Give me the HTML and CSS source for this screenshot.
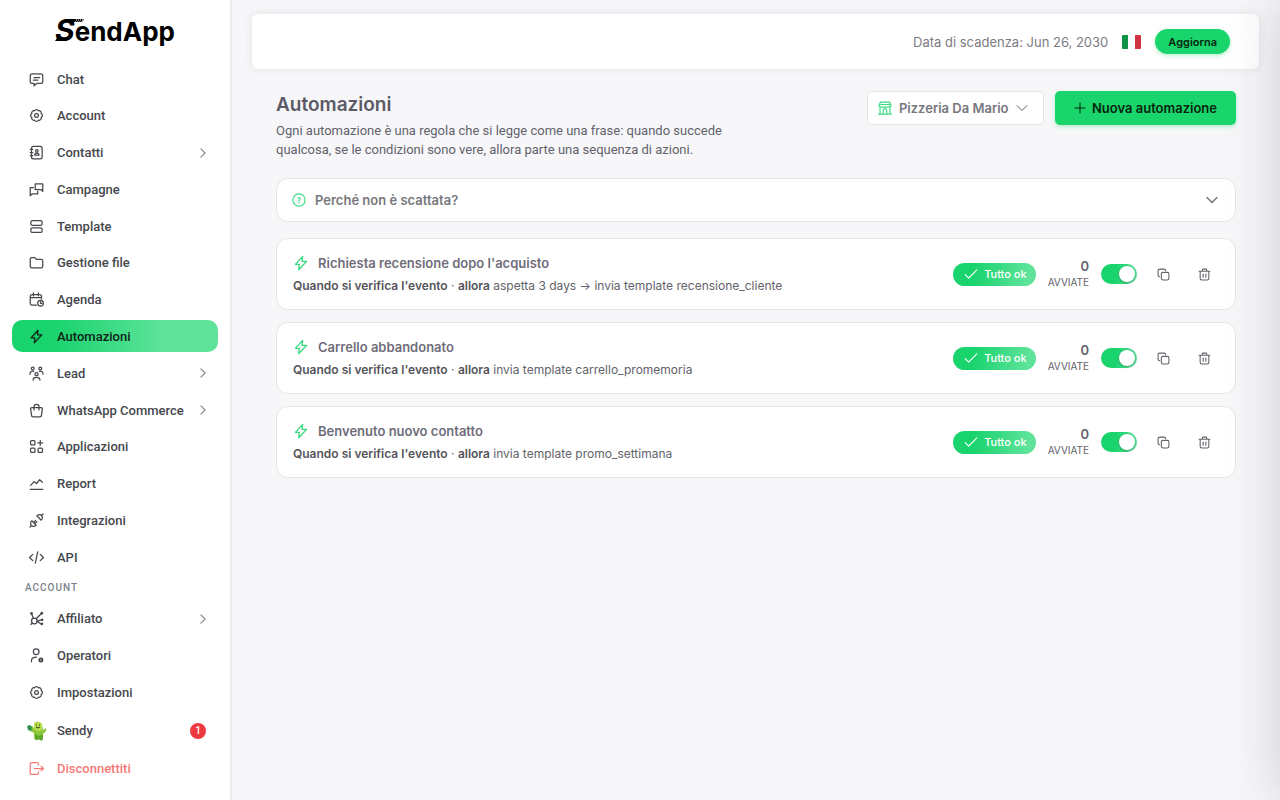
FILE: index.html
```
<!doctype html>
<html lang="it">
<head>
    <meta charset="UTF-8">
    <meta name="viewport" content="width=device-width, initial-scale=1.0">
    <title>SendApp - Automazioni</title>
    <link rel="stylesheet" href="styles.css">
</head>
<body>
<svg class="sprite" aria-hidden="true">
    <symbol id="chat" viewBox="0 0 24 24"><path d="M5 3h14a3 3 0 0 1 3 3v9a3 3 0 0 1-3 3h-6l-5 4v-4H5a3 3 0 0 1-3-3V6a3 3 0 0 1 3-3zM8 9h9M7 13h7"/></symbol>
    <symbol id="gear" viewBox="0 0 24 24"><path d="M15.1 4.600A3.300 3.300 0 0 1 19.400 8.900A3.300 3.300 0 0 1 19.400 15.100A3.300 3.300 0 0 1 15.100 19.400A3.300 3.300 0 0 1 8.900 19.400A3.300 3.300 0 0 1 4.600 15.100A3.300 3.300 0 0 1 4.600 8.900A3.300 3.300 0 0 1 8.900 4.600A3.300 3.300 0 0 1 15.100 4.600z"/><circle cx="12" cy="12" r="3"/></symbol>
    <symbol id="contacts" viewBox="0 0 24 24"><rect x="4" y="2" width="17" height="20" rx="3"/><circle cx="12.500" cy="9.500" r="2"/><path d="M9 16c0-4 7-4 7 0zM2 7h4M2 12h4M2 17h4"/></symbol>
    <symbol id="campaign" viewBox="0 0 24 24"><path d="M10 3h12v12l-3-3h-9zM7 9H2v13l3-3h9v-4"/></symbol>
    <symbol id="template" viewBox="0 0 24 24"><rect x="3" y="2.500" width="18" height="7.500" rx="2.500"/><rect x="3" y="14" width="18" height="7.500" rx="2.500"/></symbol>
    <symbol id="folder" viewBox="0 0 24 24"><path d="M2 6a2 2 0 0 1 2-2h5l3 3h8a2 2 0 0 1 2 2v9a2.500 2.500 0 0 1-2.500 2.500h-15A2.500 2.500 0 0 1 2 18z"/></symbol>
    <symbol id="agenda" viewBox="0 0 24 24"><path d="M12 21H5a3 3 0 0 1-3-3V7a3 3 0 0 1 3-3h12a3 3 0 0 1 3 3v4M2 9h18M7 1.500V6M15 1.500V6"/><circle cx="18.500" cy="18" r="4.500"/><path d="M18.500 15.500V18H21"/></symbol>
    <symbol id="bolt" viewBox="0 0 24 24"><path d="M14.500 2L3.500 14h6L8.500 22 20.500 9.500h-7z"/></symbol>
    <symbol id="lead" viewBox="0 0 24 24"><circle cx="6" cy="4" r="2.300"/><circle cx="18" cy="4" r="2.300"/><circle cx="12" cy="13" r="2.500"/><path d="M1.500 13c0-4 2-5 6-4.500M22.500 13c0-4-2-5-6-4.500M6.500 22.500c0-6 11-6 11 0"/></symbol>
    <symbol id="bag" viewBox="0 0 24 24"><path d="M4.500 7.500h15a2 2 0 0 1 2 2L20 19a3 3 0 0 1-3 3H7a3 3 0 0 1-3-3L2.500 9.500a2 2 0 0 1 2-2zM8 11V6a4 4 0 0 1 8 0v5"/></symbol>
    <symbol id="apps" viewBox="0 0 24 24"><rect x="2.500" y="2.500" width="7" height="7" rx="1.500"/><rect x="2.500" y="14.500" width="7" height="7" rx="1.500"/><rect x="14.500" y="14.500" width="7" height="7" rx="1.500"/><path d="M18 2v8M14 6h8"/></symbol>
    <symbol id="report" viewBox="0 0 24 24"><path d="M2 21.500h20M2.500 15l6-6 3.500 3 5-6 4.500 4"/></symbol>
    <symbol id="plug" viewBox="0 0 24 24"><path d="M1.500 22.500l2.500-2.500M4.500 12.500l7 7c-2 2.500-5.500 2.500-7.500.5s-2-5.500.5-7.500zM7.500 15l3-3M9.500 17l3-3M22.500 1.500L20 4M12.500 4.500l7 7c2.500-2 2.500-5.500.5-7.500s-5.500-2-7.500.5z"/></symbol>
    <symbol id="code" viewBox="0 0 24 24"><path d="M6 7l-5 5 5 5M18 7l5 5-5 5M14 3l-4 18"/></symbol>
    <symbol id="affiliate" viewBox="0 0 24 24"><circle cx="8.500" cy="16" r="4.500"/><circle cx="4" cy="4" r="1.300"/><circle cx="20.500" cy="3.500" r="1.300"/><circle cx="21" cy="14" r="1"/><circle cx="20.500" cy="20.500" r="1.300"/><path d="M4.500 5.500L7 11.500M19.500 4.500l-8 8M13 16c3 0 5-2 7.500-2M13 17c3 0 3 3.500 6.500 3.500M3 21.500l2.500-2.500"/></symbol>
    <symbol id="operator" viewBox="0 0 24 24"><circle cx="11.500" cy="6" r="4.500"/><path d="M4 22v-2c0-4 3-5.500 8-5.500"/><circle cx="19" cy="19" r="2.500" stroke-width="3"/></symbol>
    <symbol id="logout" viewBox="0 0 24 24"><path d="M15 6.500V5a2.500 2.500 0 0 0-2.500-2.500h-8A2.500 2.500 0 0 0 2 5v14a2.500 2.500 0 0 0 2.500 2.500h8A2.500 2.500 0 0 0 15 19v-1.500M8.500 12H23M19.500 8.500L23 12l-3.500 3.500"/></symbol>
    <symbol id="right" viewBox="0 0 24 24"><path d="M7 2l10 10L7 22"/></symbol>
    <symbol id="down" viewBox="0 0 24 24"><path d="M2 7l10 10L22 7"/></symbol>
    <symbol id="store" viewBox="0 0 24 24"><path d="M4 2h16l2.500 6a3 3 0 0 1-5.200 1.500 3.500 3.500 0 0 1-5.300 0 3.500 3.500 0 0 1-5.300 0A3 3 0 0 1 1.500 8zM2 6h20M3.500 11v11M20.500 11v11M1 22.500h22M9 22v-6a3 3 0 0 1 6 0v6"/></symbol>
    <symbol id="plus" viewBox="0 0 24 24"><path d="M12 2v20M2 12h20"/></symbol>
    <symbol id="help" viewBox="0 0 24 24"><circle cx="12" cy="12" r="10.500"/><path d="M10 8.500c3-2 5 .5 3.500 2.500-.5.700-1.500 1-1.500 2.500M12 16v1"/></symbol>
    <symbol id="check" viewBox="0 0 24 24"><path d="M2 13l6 6L22 5"/></symbol>
    <symbol id="copy" viewBox="0 0 24 24"><rect x="8" y="8" width="14" height="14" rx="3"/><path d="M5 16a3 3 0 0 1-3-3V5a3 3 0 0 1 3-3h8a3 3 0 0 1 3 3"/></symbol>
    <symbol id="trash" viewBox="0 0 24 24"><path d="M2 6h20M7.500 6l1-4h7l1 4M4 6v13a3 3 0 0 0 3 3h10a3 3 0 0 0 3-3V6M9.500 11v6M14.500 11v6"/></symbol>
</svg>

<div class="layout">
    <aside class="sidebar">
        <a class="logo" href="#"><span class="logo-s">S</span>endApp
            <svg class="logo-swoosh" viewBox="0 0 32 26">
                <path d="M13 2h16l-2 3H12zM2 21h10v3H0z"/>
                <path d="M21 3h9M20 5h9" stroke="#fff" stroke-dasharray="1 1"/>
            </svg>
        </a>
        <nav class="menu">
            <a class="menu-item" href="#"><svg class="icon"><use href="#chat"/></svg>Chat</a>
            <a class="menu-item" href="#"><svg class="icon"><use href="#gear"/></svg>Account</a>
            <a class="menu-item" href="#"><svg class="icon"><use href="#contacts"/></svg>Contatti<svg class="icon arrow"><use href="#right"/></svg></a>
            <a class="menu-item" href="#"><svg class="icon"><use href="#campaign"/></svg>Campagne</a>
            <a class="menu-item" href="#"><svg class="icon"><use href="#template"/></svg>Template</a>
            <a class="menu-item" href="#"><svg class="icon"><use href="#folder"/></svg>Gestione file</a>
            <a class="menu-item" href="#"><svg class="icon"><use href="#agenda"/></svg>Agenda</a>
            <a class="menu-item active" href="#"><svg class="icon"><use href="#bolt"/></svg>Automazioni</a>
            <a class="menu-item" href="#"><svg class="icon"><use href="#lead"/></svg>Lead<svg class="icon arrow"><use href="#right"/></svg></a>
            <a class="menu-item" href="#"><svg class="icon"><use href="#bag"/></svg>WhatsApp Commerce<svg class="icon arrow"><use href="#right"/></svg></a>
            <a class="menu-item" href="#"><svg class="icon"><use href="#apps"/></svg>Applicazioni</a>
            <a class="menu-item" href="#"><svg class="icon"><use href="#report"/></svg>Report</a>
            <a class="menu-item" href="#"><svg class="icon"><use href="#plug"/></svg>Integrazioni</a>
            <a class="menu-item" href="#"><svg class="icon"><use href="#code"/></svg>API</a>
            <div class="menu-label">ACCOUNT</div>
            <a class="menu-item" href="#"><svg class="icon"><use href="#affiliate"/></svg>Affiliato<svg class="icon arrow"><use href="#right"/></svg></a>
            <a class="menu-item" href="#"><svg class="icon"><use href="#operator"/></svg>Operatori</a>
            <a class="menu-item" href="#"><svg class="icon"><use href="#gear"/></svg>Impostazioni</a>
            <a class="menu-item sendy" href="#">
                <svg class="mascot" viewBox="0 0 20 20">
                    <path d="M7 3c1-3 7-3 8 1l1 5 3-2c1 3-1 4-3 6v4c0 3-3 3-4 1-2 2-5 1-5-2l0-4-4-2-1-4 3-1 2 2z" fill="#8cc63a"/>
                    <path d="M7 3c1-3 7-3 8 1v5c-3 2-6 1-8-1z" fill="#b6de4c"/>
                    <path d="M0 5l3-1 2 2-1 4-3-1z" fill="#2f9150"/>
                    <path d="M8 13l4 2 4-2v4c0 3-3 3-4 1-2 2-4 1-4-1z" fill="#5da52d"/>
                    <path d="M9 6q2 2 4 0M9 4h1M12 4h1" stroke="#344018" fill="none"/>
                </svg>Sendy<span class="count">1</span></a>
            <a class="menu-item logout" href="#"><svg class="icon"><use href="#logout"/></svg>Disconnettiti</a>
        </nav>
    </aside>

    <main class="main">
        <header class="topbar">
            <span class="expire">Data di scadenza: Jun 26, 2030</span>
            <svg class="flag" viewBox="0 0 19 14" role="img" aria-label="Italiano"><path d="M1 0h5v14H1a1 1 0 0 1-1-1V1a1 1 0 0 1 1-1z" fill="#109347"/><path d="M6 0h7v14H6z" fill="#fff"/><path d="M13 0h5a1 1 0 0 1 1 1v12a1 1 0 0 1-1 1h-5z" fill="#d13440"/></svg>
            <button class="btn btn-pill" type="button">Aggiorna</button>
        </header>

        <div class="content">
            <div class="page-head">
                <div class="intro">
                    <h1>Automazioni</h1>
                    <p>Ogni automazione è una regola che si legge come una frase: quando succede qualcosa, se le condizioni sono vere, allora parte una sequenza di azioni.</p>
                </div>
                <div class="tools">
                    <label class="picker">
                        <svg class="icon green"><use href="#store"/></svg>
                        <select aria-label="Account"><option>Pizzeria Da Mario</option></select>
                        <svg class="icon caret"><use href="#down"/></svg>
                    </label>
                    <button class="btn btn-new" type="button"><svg class="icon"><use href="#plus"/></svg>Nuova automazione</button>
                </div>
            </div>

            <details class="card why">
                <summary><svg class="icon green"><use href="#help"/></svg>Perché non è scattata?<svg class="icon caret"><use href="#down"/></svg></summary>
            </details>

            <div class="rules">
                <article class="card rule">
                    <div class="rule-text">
                        <h2><svg class="icon green"><use href="#bolt"/></svg>Richiesta recensione dopo l'acquisto</h2>
                        <p><b>Quando si verifica l'evento</b> · <b>allora</b> aspetta 3 days → invia template recensione_cliente</p>
                    </div>
                    <span class="badge"><svg class="icon"><use href="#check"/></svg>Tutto ok</span>
                    <div class="stat"><b>0</b><span>AVVIATE</span></div>
                    <input class="switch" type="checkbox" aria-label="Attiva Richiesta recensione" checked>
                    <button class="icon-btn" type="button" aria-label="Duplica"><svg class="icon"><use href="#copy"/></svg></button>
                    <button class="icon-btn" type="button" aria-label="Elimina"><svg class="icon"><use href="#trash"/></svg></button>
                </article>
                <article class="card rule">
                    <div class="rule-text">
                        <h2><svg class="icon green"><use href="#bolt"/></svg>Carrello abbandonato</h2>
                        <p><b>Quando si verifica l'evento</b> · <b>allora</b> invia template carrello_promemoria</p>
                    </div>
                    <span class="badge"><svg class="icon"><use href="#check"/></svg>Tutto ok</span>
                    <div class="stat"><b>0</b><span>AVVIATE</span></div>
                    <input class="switch" type="checkbox" aria-label="Attiva Carrello abbandonato" checked>
                    <button class="icon-btn" type="button" aria-label="Duplica"><svg class="icon"><use href="#copy"/></svg></button>
                    <button class="icon-btn" type="button" aria-label="Elimina"><svg class="icon"><use href="#trash"/></svg></button>
                </article>
                <article class="card rule">
                    <div class="rule-text">
                        <h2><svg class="icon green"><use href="#bolt"/></svg>Benvenuto nuovo contatto</h2>
                        <p><b>Quando si verifica l'evento</b> · <b>allora</b> invia template promo_settimana</p>
                    </div>
                    <span class="badge"><svg class="icon"><use href="#check"/></svg>Tutto ok</span>
                    <div class="stat"><b>0</b><span>AVVIATE</span></div>
                    <input class="switch" type="checkbox" aria-label="Attiva Benvenuto nuovo contatto" checked>
                    <button class="icon-btn" type="button" aria-label="Duplica"><svg class="icon"><use href="#copy"/></svg></button>
                    <button class="icon-btn" type="button" aria-label="Elimina"><svg class="icon"><use href="#trash"/></svg></button>
                </article>
            </div>
        </div>
    </main>
</div>
<div class="drawer"></div>
</body>
</html>
```
FILE: styles.css
```
*{
    margin: 0;
    padding: 0;
    box-sizing: border-box;
}
body{
    font-family: Inter, "Liberation Sans", sans-serif;
    font-size: 13px;
    color: #62626a;
    background: #f7f7fa;
    overflow-x: hidden;
}
a{
    color: inherit;
    text-decoration: none;
}
button, select, input{
    font: inherit;
    color: inherit;
    border: 0;
    background: none;
}
.sprite{
    display: none;
}
.icon{
    width: 16px;
    height: 16px;
    flex: none;
    fill: none;
    stroke: currentColor;
    stroke-width: 2;
    stroke-linecap: round;
    stroke-linejoin: round;
}
.green{
    color: #3ddc84;
}
.layout{
    display: flex;
    min-height: 100vh;
}

/* sidebar */
.sidebar{
    display: flex;
    flex-direction: column;
    width: 232px;
    height: 100vh;
    padding: 0 12px 15px;
    background: #fff;
    border-right: 2px solid #ebebef;
    flex: none;
}
.logo{
    position: relative;
    height: 63px;
    text-align: center;
    font-size: 26px;
    font-weight: 700;
    line-height: 63px;
    color: #000;
}
.logo-s{
    font-size: 30px;
    font-style: italic;
    line-height: 1;
}
.logo-swoosh{
    position: absolute;
    left: 43px;
    top: 17px;
    width: 32px;
    height: 26px;
}
.menu{
    display: flex;
    flex-direction: column;
    flex: 1;
    justify-content: space-between;
    font-family: Roboto, "Liberation Sans", sans-serif;
}
.menu-item{
    display: flex;
    align-items: center;
    gap: 13px;
    height: 32px;
    padding: 0 10px 0 17px;
    border-radius: 10px;
    font-weight: 500;
    white-space: nowrap;
    color: #46484d;
}
.menu-item .icon{
    width: 15px;
    height: 15px;
}
.menu-item .arrow{
    width: 10px;
    height: 10px;
    margin-left: auto;
    stroke-width: 3;
    color: #8b8d92;
}
.menu-item.active{
    color: #0d2417;
    background: linear-gradient(90deg, #19d36d 20%, #5fe39b 75%);
}
.menu-label{
    padding-left: 13px;
    font-size: 10px;
    font-weight: 500;
    line-height: 20px;
    letter-spacing: 1px;
    color: #7c818d;
}
.menu-item.sendy{
    height: 35px;
    gap: 10px;
    padding: 0 12px 0 15px;
}
.mascot{
    width: 20px;
    height: 20px;
}
.count{
    width: 16px;
    height: 16px;
    margin-left: auto;
    border-radius: 50%;
    font-size: 10px;
    line-height: 16px;
    text-align: center;
    color: #fff;
    background: #ed3a41;
}
.menu-item.logout{
    color: #f47a78;
}

/* main */
.main{
    flex: 1;
    padding: 14px 21px 20px 20px;
}
.topbar{
    display: flex;
    align-items: center;
    justify-content: flex-end;
    gap: 14px;
    height: 55px;
    padding: 0 29px;
    border-radius: 6px;
    background: #fff;
    box-shadow: 0 0 10px rgba(50, 50, 60, .1);
}
.expire{
    color: #7c7c82;
}
.flag{
    width: 19px;
    height: 14px;
}
.btn{
    font-weight: 600;
    color: #06250f;
    background: #19d56b;
    box-shadow: 0 2px 4px rgba(25, 213, 107, .3);
}
.btn-pill{
    height: 25px;
    padding: 0 13px;
    border-radius: 13px;
    font-size: 11px;
}
.content{
    padding: 22px 23px 0 24px;
}
.page-head{
    display: flex;
    justify-content: space-between;
    align-items: flex-start;
    min-height: 87px;
}
.intro{
    max-width: 480px;
}
.intro h1{
    font-size: 19px;
    font-weight: 600;
    line-height: 28px;
    margin-bottom: 2px;
    color: #5c5a66;
}
.intro p{
    font-family: Roboto, "Liberation Sans", sans-serif;
    line-height: 19px;
}
.tools{
    display: flex;
    gap: 11px;
}
.picker{
    display: flex;
    align-items: center;
    gap: 7px;
    height: 34px;
    padding: 0 15px 0 10px;
    border: 1px solid #e6e6ea;
    border-radius: 5px;
    background: #fff;
}
.picker .green{
    width: 14px;
    height: 14px;
}
.picker select{
    appearance: none;
    font-weight: 600;
    color: #77777e;
}
.picker .caret, .why .caret, .btn-new .icon{
    width: 12px;
    height: 12px;
}
.btn-new{
    display: flex;
    align-items: center;
    gap: 6px;
    height: 34px;
    padding: 0 19px;
    border-radius: 5px;
}
.card{
    border: 1px solid #e4e4e7;
    border-radius: 12px;
    background: #fff;
}
.why{
    margin-bottom: 16px;
}
.why summary{
    display: flex;
    align-items: center;
    gap: 9px;
    height: 42px;
    padding: 0 17px 0 15px;
    font-weight: 600;
    color: #77777d;
    list-style: none;
}
.why .green{
    width: 14px;
    height: 14px;
}
.why .caret{
    margin-left: auto;
    stroke-width: 3;
}
.rules{
    display: grid;
    gap: 12px;
}
.rule{
    display: flex;
    align-items: center;
    gap: 12px;
    padding: 12px 16px;
}
.rule-text{
    flex: 1;
}
.rule h2{
    display: flex;
    align-items: center;
    gap: 9px;
    font-size: 13px;
    font-weight: 600;
    line-height: 24px;
    color: #6f6d7a;
}
.rule p{
    font-size: 12px;
    line-height: 22px;
}
.rule p b{
    font-weight: 600;
    color: #55555b;
}
.badge{
    display: flex;
    align-items: center;
    gap: 6px;
    height: 23px;
    padding: 0 9px 0 11px;
    border-radius: 12px;
    font-size: 11px;
    font-weight: 500;
    color: #fff;
    background: linear-gradient(100deg, #19d36d 25%, #5fe39b 90%);
}
.badge .icon{
    width: 14px;
    height: 14px;
}
.stat{
    display: flex;
    flex-direction: column;
    align-items: flex-end;
}
.stat b{
    font-size: 13px;
    font-weight: 600;
    line-height: 16px;
}
.stat span{
    font-size: 10px;
    line-height: 16px;
}
.switch{
    appearance: none;
    width: 36px;
    height: 20px;
    padding: 2px;
    border-radius: 10px;
    background: #d5d5da;
}
.switch::before{
    content: "";
    display: block;
    width: 16px;
    height: 16px;
    border-radius: 50%;
    background: #fff;
    box-shadow: 0 1px 3px rgba(0, 0, 0, .25);
}
.switch:checked{
    background: linear-gradient(100deg, #19d36d 40%, #5fe39b);
}
.switch:checked::before{
    margin-left: auto;
}
.icon-btn{
    display: flex;
    align-items: center;
    justify-content: center;
    width: 29px;
    height: 29px;
}
.icon-btn .icon{
    width: 13px;
    height: 13px;
}

/* closed drawer, only its shadow reaches the page */
.drawer{
    position: fixed;
    top: 0;
    left: 100%;
    width: 300px;
    height: 100vh;
    box-shadow: 0 0 50px rgba(40, 40, 50, .2);
}
```
